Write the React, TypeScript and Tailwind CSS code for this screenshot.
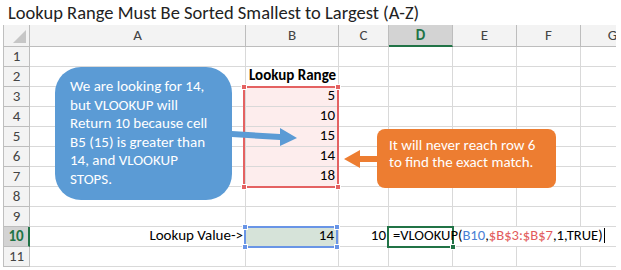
const FONT = { fontFamily: "Carlito, Lato, 'Liberation Sans', sans-serif" };

const LETTERS = ["A", "B", "C", "D", "E", "F", "G"];

function Cell({ row, col }: { row: number; col: number }) {
  // col 1..7 = A..G
  const pink = col === 2 && row >= 3 && row <= 7;
  const sel = col === 2 && row === 10;
  const noRight = row === 10 && (col === 4 || col === 5 || col === 6);
  const base = "border-b border-[#d9d9d9] text-[15px] leading-none text-black flex items-end pb-[3px] whitespace-nowrap";
  const right = noRight ? "" : col === 7 ? "border-r border-[#bfbfbf]" : "border-r border-[#d9d9d9]";
  const bg = pink ? "bg-[#fdeded]" : sel ? "bg-[#d6e3d9]" : "bg-white";

  let content: React.ReactNode = null;
  let align = "justify-start pl-[3px]";
  const nums: Record<number, string> = { 3: "5", 4: "10", 5: "15", 6: "14", 7: "18" };
  if (col === 2 && row === 2) content = <span className="font-bold">Lookup Range</span>;
  if (col === 2 && nums[row]) {
    content = nums[row];
    align = "justify-end pr-[3px]";
  }
  if (row === 10 && col === 1) {
    content = "Lookup Value->";
    align = "justify-end pr-[2px]";
  }
  if (row === 10 && col === 2) {
    content = "14";
    align = "justify-end pr-[4px]";
  }
  if (row === 10 && col === 3) {
    content = "10";
    align = "justify-end pr-[2px]";
  }
  if (row === 10 && col === 4) {
    content = (
      <span className="relative z-10 pl-[1px] pr-[1px] text-[14.6px] border-r border-black">
        =VLOOKUP(<span className="text-[#4a7fd4]">B10</span>,
        <span className="text-[#e25b5b]">$B$3:$B$7</span>,1,TRUE)
      </span>
    );
  }
  return <div className={`${base} ${right} ${bg} ${align} overflow-visible`}>{content}</div>;
}

function Range({ className, color }: { className: string; color: string }) {
  const h = "absolute w-[6px] h-[6px] border border-white";
  return (
    <div className={`absolute border-2 ${className}`} style={{ borderColor: color }}>
      <div className={`${h} -left-[4px] -top-[4px]`} style={{ background: color }} />
      <div className={`${h} -right-[4px] -top-[4px]`} style={{ background: color }} />
      <div className={`${h} -left-[4px] -bottom-[4px]`} style={{ background: color }} />
      <div className={`${h} -right-[4px] -bottom-[4px]`} style={{ background: color }} />
    </div>
  );
}

export default function App() {
  const rows = Array.from({ length: 11 }, (_, i) => i + 1);
  return (
    <div className="relative w-[621px] h-[270px] bg-white overflow-hidden" style={FONT}>
      <div className="h-[25px] pl-[8px] flex items-center text-[18.5px] text-[#222] leading-none pt-[1px]">
        Lookup Range Must Be Sorted Smallest to Largest (A-Z)
      </div>

      <div className="ml-[3px] w-[613px] grid grid-cols-[26px_216px_93px_50px_64px_64px_64px_36px] grid-rows-[22px_repeat(11,20px)] border-l border-[#bfbfbf] overflow-hidden">
        {/* corner */}
        <div className="bg-[#f3f3f3] border-r border-b border-[#bdbdbd] flex items-end justify-end p-[3px]">
          <svg width="13" height="13" viewBox="0 0 13 13">
            <polygon points="13,0 13,13 0,13" fill="#c6c6c6" />
          </svg>
        </div>
        {LETTERS.map((l) =>
          l === "D" ? (
            <div
              key={l}
              className="bg-[#d3d3d3] border-r border-[#bdbdbd] border-b-2 border-b-[#217346] flex items-center justify-center text-[15px] font-bold text-[#217346]"
            >
              {l}
            </div>
          ) : (
            <div
              key={l}
              className={`bg-[#f3f3f3] border-b border-[#bdbdbd] flex items-center justify-center text-[15px] text-[#444] overflow-hidden ${
                l === "G" ? "border-r border-r-[#bfbfbf] pl-[28px]" : "border-r"
              }`}
            >
              {l}
            </div>
          )
        )}
        {rows.map((r) => (
          <div key={r} className="contents">
            {r === 10 ? (
              <div className="bg-[#d3d3d3] border-b border-[#bdbdbd] border-r-2 border-r-[#217346] flex items-center justify-center text-[15px] font-bold text-[#217346]">
                {r}
              </div>
            ) : (
              <div className="bg-[#f3f3f3] border-r border-b border-[#bdbdbd] flex items-center justify-center text-[15px] text-[#444]">
                {r}
              </div>
            )}
            {LETTERS.map((_, c) => (
              <Cell key={c} row={r} col={c + 1} />
            ))}
          </div>
        ))}
      </div>

      {/* selections */}
      <Range className="left-[243px] top-[86px] w-[96px] h-[102px]" color="#e46262" />
      <Range className="left-[244px] top-[226px] w-[94px] h-[22px]" color="#6995e6" />
      <div className="absolute left-[387px] top-[226px] w-[67px] h-[22px] border-2 border-[#217346]">
        <div className="absolute -right-[4px] -bottom-[4px] w-[6px] h-[6px] bg-[#217346] border border-white" />
      </div>

      {/* callouts */}
      <div className="absolute left-[55px] top-[67px] w-[177px] h-[133px] rounded-[26px] bg-[#5b9bd5] text-white text-[15px] leading-[18.5px] pl-[15px] pt-[10px]">
        We are looking for 14,
        <br />
        but VLOOKUP will
        <br />
        Return 10 because cell
        <br />
        B5 (15) is greater than
        <br />
        14, and VLOOKUP
        <br />
        STOPS.
      </div>
      <div className="absolute left-[377px] top-[129px] w-[179px] h-[59px] rounded-[8px] bg-[#ed7d31] text-white text-[15px] leading-[17px] pl-[12px] pt-[8px]">
        It will never reach row 6
        <br />
        to find the exact match.
      </div>

      <svg className="absolute left-0 top-0 pointer-events-none" width="621" height="270">
        <polygon points="232,131 280,134 280,128 297,138 280,146 280,140 232,137" fill="#5b9bd5" />
        <polygon points="377,156 360,156 360,150 344,159 360,168 360,162 377,162" fill="#ed7d31" />
      </svg>
    </div>
  );
}
